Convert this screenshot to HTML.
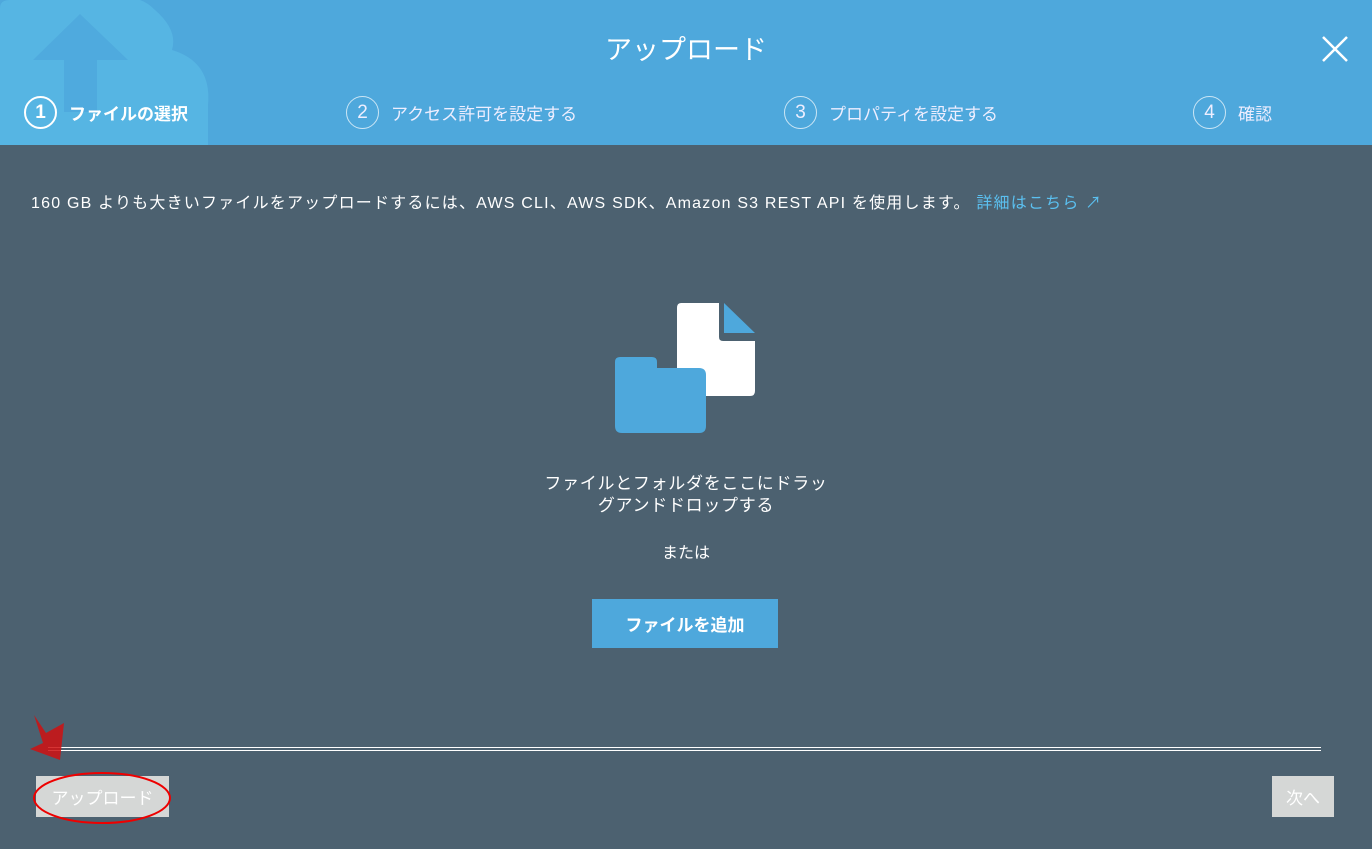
<html><head><style>
body{margin:0;width:1372px;height:849px;background:#4c6170;font-family:"Liberation Sans","Noto Sans CJK JP",sans-serif;color:#fff;overflow:hidden;position:relative}
.hd{position:absolute;left:0;top:0;width:1372px;height:145px;background:#4ea8dc}
.t{position:absolute;top:28px;width:100%;text-align:center;font-size:27px}
.st{position:absolute;top:96px;font-size:17px;display:flex;align-items:center}
.c{border:1.5px solid rgba(255,255,255,.7);border-radius:50%;display:inline-flex;align-items:center;justify-content:center;font-size:19px;margin-right:12px;box-sizing:border-box;width:33px;height:33px}
.ab{position:absolute;font-size:16px}
</style></head><body>
<div class="hd">
<svg width="220" height="145" style="position:absolute;left:0;top:0"><path d="M0 8 Q0 0 10 0 H125 Q140 -5 155 10 Q178 30 172 50 Q212 62 208 105 V145 H0Z" fill="#56b5e3"/><path d="M33 60 L80 14 L128 60 H97 V112 H64 V60Z" fill="#4ea8dc" opacity=".8"/></svg>
<div class="t">アップロード</div>
<svg width="30" height="30" style="position:absolute;left:1320px;top:34px"><path d="M3 3L27 27M27 3L3 27" stroke="#fff" stroke-width="2.5"/></svg>
<div class="st" style="left:24px;font-weight:bold"><span class="c" style="border-color:#fff;border-width:2px">1</span>ファイルの選択</div>
<div class="st" style="left:346px;color:#eef"><span class="c">2</span>アクセス許可を設定する</div>
<div class="st" style="left:784px;color:#eef"><span class="c">3</span>プロパティを設定する</div>
<div class="st" style="left:1193px;color:#eef"><span class="c">4</span>確認</div>
</div>
<div class="ab" style="left:31px;top:189px;letter-spacing:1.2px">160 GB よりも大きいファイルをアップロードするには、AWS CLI、AWS SDK、Amazon S3 REST API を使用します。 <span style="color:#5bc0f0">詳細はこちら ↗</span></div>
<svg width="160" height="140" style="position:absolute;left:610px;top:300px">
<path d="M71 3 H109 V37 Q109 41 113 41 H145 V91 Q145 96 140 96 H71 Q67 96 67 91 V8 Q67 3 71 3Z" fill="#fff"/>
<path d="M114 3 L145 33 H114Z" fill="#4ea8dc"/>
<path d="M10 57 H42 Q47 57 47 62 V68 H89 Q96 68 96 75 V126 Q96 133 89 133 H12 Q5 133 5 126 V62 Q5 57 10 57Z" fill="#4ea8dc"/>
</svg>
<div class="ab" style="left:0;width:1372px;text-align:center;top:473px;font-size:17px;line-height:22px;letter-spacing:.7px">ファイルとフォルダをここにドラッ<br>グアンドドロップする</div>
<div class="ab" style="left:0;width:1372px;text-align:center;top:539px;font-size:16px">または</div>
<div style="position:absolute;left:592px;top:599px;width:186px;height:49px;background:#4ea8dc;font-weight:bold;font-size:17px;display:flex;align-items:center;justify-content:center">ファイルを追加</div>
<div style="position:absolute;left:48px;top:747px;width:1273px;height:2px;border-top:1px solid #fff;border-bottom:1px solid #fff"></div>
<svg width="40" height="45" style="position:absolute;left:28px;top:715px"><path d="M6 0 L18 18 L36 8 L32 45 L2 34 L15 28Z" fill="#d01010" opacity=".85"/></svg>
<div style="position:absolute;left:36px;top:776px;width:133px;height:41px;background:#d5d7d6;color:#fff;font-size:17px;display:flex;align-items:center;justify-content:center">アップロード</div>
<svg width="145" height="60" style="position:absolute;left:30px;top:768px"><ellipse cx="72" cy="30" rx="68" ry="25" fill="none" stroke="#e00" stroke-width="2"/></svg>
<div style="position:absolute;left:1272px;top:776px;width:62px;height:41px;background:#d5d7d6;color:#fff;font-size:17px;display:flex;align-items:center;justify-content:center">次へ</div>
</body></html>
